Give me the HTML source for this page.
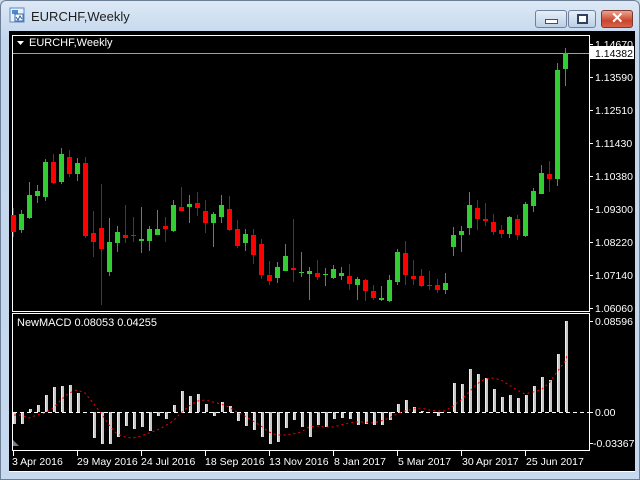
<!DOCTYPE html>
<html><head><meta charset="utf-8">
<style>
html,body{margin:0;padding:0;width:640px;height:480px;overflow:hidden;background:#c9dcef;}
.win{position:absolute;left:0;top:0;width:638px;height:478px;border:1px solid #6d7f95;border-radius:6px 6px 0 0;background:linear-gradient(#dce8f5,#c2d6ec 40px,#c6d9ee);}
.title{position:absolute;left:31px;top:9px;font:13px "Liberation Sans",sans-serif;color:#1e1e1e;}
.btn{position:absolute;top:10px;height:16px;border:1px solid #6f8299;border-radius:3px;background:linear-gradient(#e6eef8,#bccfe5);}
.cls{background:linear-gradient(#e9a593,#c9452c 60%,#d6634a);border-color:#7a3a2e;}
svg{position:absolute;left:0;top:0}
</style></head><body>
<div class="win"></div>
<svg width="640" height="480" style="position:absolute;left:0;top:0">
<rect x="10" y="8" width="14" height="14" fill="#e8f0fa" stroke="#5d88c0"/>
<rect x="12" y="10" width="6" height="4" fill="#4a8ad0"/>
<rect x="15" y="14" width="8" height="7" fill="#fff" stroke="#3a6aa8"/>
<path d="M16 17 L18 20 L20 16 L22 19" stroke="#2060b0" fill="none"/>
</svg>
<div class="title">EURCHF,Weekly</div>
<div class="btn" style="left:535px;width:30px"><div style="position:absolute;left:9px;top:8px;width:11px;height:3px;background:#fff;border:1px solid #405070"></div></div>
<div class="btn" style="left:568px;width:26px"><div style="position:absolute;left:8px;top:3px;width:7px;height:6px;border:2px solid #304060;background:#fff"></div></div>
<div class="btn cls" style="left:601px;width:30px"><div style="position:absolute;left:9px;top:-2px;color:#fff;font:bold 15px 'Liberation Sans',sans-serif">✕</div></div>
<svg width="640" height="480" id="c" style="font-family:'Liberation Sans',sans-serif;font-size:10px">
<rect x="9" y="31" width="626" height="441" fill="#000"/>
<rect x="12.5" y="35.5" width="577" height="276" fill="none" stroke="#fff"/>
<rect x="12.5" y="313.5" width="577" height="137" fill="none" stroke="#fff"/>
<line x1="13" y1="53.5" x2="589" y2="53.5" stroke="#a0a0a0"/>
<path d="M17 41 h7 l-3.5 4 z" fill="#fff"/>
<text x="29" y="46" fill="#fff" font-size="11">EURCHF,Weekly</text>
<text x="17" y="326" fill="#fff" font-size="11">NewMACD 0.08053 0.04255</text>
<g id="g"></g>
<g fill="#fff" font-size="10.5">
<text x="595" y="48">1.14670</text>
<text x="595" y="81">1.13590</text>
<text x="595" y="114">1.12510</text>
<text x="595" y="147">1.11430</text>
<text x="595" y="180">1.10380</text>
<text x="595" y="213">1.09300</text>
<text x="595" y="246">1.08220</text>
<text x="595" y="279">1.07140</text>
<text x="595" y="312">1.06060</text>
<text x="595" y="325">0.08596</text>
<text x="595" y="416">0.00</text>
<text x="593" y="447">-0.03367</text>
</g>
<rect x="590" y="46" width="44" height="13" fill="#fff"/>
<text x="595" y="57" fill="#000" font-size="10.5">1.14382</text>
<g fill="#fff" font-size="10.5">
<text x="12" y="465">3 Apr 2016</text>
<text x="77" y="465">29 May 2016</text>
<text x="141" y="465">24 Jul 2016</text>
<text x="205" y="465">18 Sep 2016</text>
<text x="269" y="465">13 Nov 2016</text>
<text x="334" y="465">8 Jan 2017</text>
<text x="398" y="465">5 Mar 2017</text>
<text x="462" y="465">30 Apr 2017</text>
<text x="526" y="465">25 Jun 2017</text>
</g>
<line x1="9" y1="471.5" x2="635" y2="471.5" stroke="#fff"/>
<path d="M13 440 l6 6 h-6z" fill="#708090"/>
</svg>
<script>
var C=[[0,215,232,208,237],[1,214,230,210,233],[1,195,218,182,219],[1,191,196,185,203],[1,162,197,159,201],[0,162,183,154,184],[1,154,182,148,184],[0,157,174,150,177],[1,163,174,158,181],[0,163,236,157,238],[0,233,242,211,257],[0,228,249,184,305],[1,242,272,218,276],[1,232,243,226,252],[0,235,238,205,243],[0,235,236,217,242],[1,239,241,207,253],[1,229,241,226,251],[1,229,235,210,235],[0,226,229,217,242],[1,205,231,200,232],[0,207,211,187,211],[1,204,207,195,223],[0,203,208,192,216],[0,211,223,200,233],[1,214,223,212,247],[1,205,217,195,223],[0,209,230,196,231],[0,229,246,220,248],[1,234,243,229,251],[0,235,255,229,264],[0,244,275,239,279],[0,275,281,261,285],[1,267,278,262,283],[1,256,271,244,271],[0,268,270,219,282],[1,272,273,252,277],[1,271,274,267,300],[0,273,277,260,280],[1,274,275,268,286],[1,269,278,265,279],[1,273,276,267,280],[0,276,284,264,290],[1,279,285,277,300],[0,280,291,279,301],[0,291,298,285,300],[1,298,300,286,301],[1,280,301,275,302],[1,252,282,249,285],[0,253,275,241,285],[0,276,279,260,285],[0,276,286,269,287],[0,285,286,271,290],[0,285,290,279,293],[1,283,290,273,294],[1,235,247,227,256],[1,231,235,226,252],[1,205,228,192,235],[0,208,219,200,230],[0,219,221,203,226],[0,222,232,214,235],[0,230,234,225,238],[1,217,234,216,238],[0,219,235,215,240],[1,204,236,202,237],[1,191,206,188,212],[1,173,194,165,194],[0,174,179,161,192],[1,70,179,63,186],[1,53,69,48,86]];
var H=[424,424,409,405,395,387,386,385,393,412,438,444,444,437,426,429,427,431,416,419,405,391,396,394,404,416,402,406,421,426,430,437,444,442,428,420,427,437,425,427,419,418,419,425,424,425,425,420,404,400,407,411,412,416,412,383,384,369,374,378,389,397,395,398,395,386,377,380,354,321];
var S=[[14,415],[21,415],[29,418],[37,415],[45,413],[53,408],[61,400],[69,393],[77,390],[85,393],[93,403],[101,413],[109,425],[117,434],[125,437],[133,438],[141,436],[149,433],[157,430],[165,426],[173,421],[181,413],[189,406],[197,401],[205,400],[213,402],[221,404],[229,407],[237,412],[245,416],[253,421],[261,426],[269,432],[277,435],[285,435],[293,434],[301,432],[309,427],[317,426],[325,427],[333,427],[341,425],[349,423],[357,422],[365,422],[373,423],[381,421],[389,418],[397,414],[405,411],[413,409],[421,408],[429,410],[437,411],[445,411],[453,406],[461,400],[469,392],[477,384],[485,379],[493,378],[501,380],[509,385],[517,390],[525,394],[533,392],[541,390],[549,383],[557,372],[566,360],[567,355]];
var s='';
C.forEach(function(c,k){var x=13.5+8*k;var col=c[0]?'#32cd32':'#ff0000';var wc=c[0]?'#2aa82a':'#d00000';
s+='<line x1="'+x+'" y1="'+c[3]+'" x2="'+x+'" y2="'+c[4]+'" stroke="'+wc+'"/>';
var h=Math.max(c[2]-c[1],1);s+='<rect x="'+(x-2.5)+'" y="'+c[1]+'" width="5" height="'+h+'" fill="'+col+'"/>';});
H.forEach(function(y,k){var x=13+8*k;var t=Math.min(y,412),b=Math.max(y,412);if(b-t<1)return;
s+='<rect x="'+x+'" y="'+t+'" width="3" height="'+(b-t)+'" fill="#c8c8c8"/><rect x="'+x+'" y="'+t+'" width="1" height="'+(b-t)+'" fill="#f0f0f0"/>';});
s+='<line x1="13" y1="412.5" x2="589" y2="412.5" stroke="#fff" stroke-dasharray="4,3"/>';
s+='<polyline fill="none" stroke="#ff0000" stroke-dasharray="2,3" points="'+S.map(function(p){return p.join(',')}).join(' ')+'"/>';
[13,77,141,205,269,333,397,461,525].forEach(function(x){s+='<line x1="'+(x+.5)+'" y1="451" x2="'+(x+.5)+'" y2="456" stroke="#fff"/>';});
[44,77,110,143,176,209,242,275,308,321,412,443].forEach(function(y){s+='<line x1="589" y1="'+(y+.5)+'" x2="593" y2="'+(y+.5)+'" stroke="#fff"/>';});
document.getElementById('g').innerHTML=s;
</script>
</body></html>
